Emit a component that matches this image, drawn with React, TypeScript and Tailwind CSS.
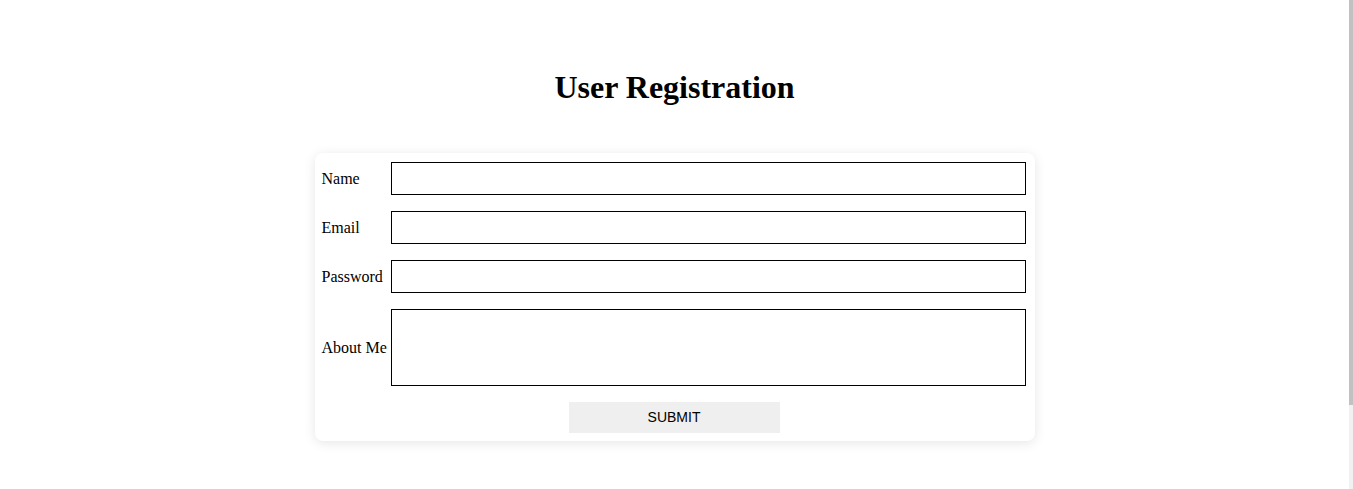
import { useState } from "react"

export default function App() {
  const [form, setForm] = useState({ name: "", email: "", password: "", about: "" })

  const update = (key: keyof typeof form) => (e: React.ChangeEvent<HTMLInputElement | HTMLTextAreaElement>) =>
    setForm({ ...form, [key]: e.target.value })

  const inputClass = "h-[33px] w-full border border-black bg-white outline-none"

  return (
    <div className="min-h-screen bg-white text-black font-['Liberation_Serif','Times_New_Roman',serif] pr-[4px]">
      <h1 className="pt-[69px] text-center text-[32px] font-bold leading-[37px]">User Registration</h1>

      <form
        onSubmit={(e) => e.preventDefault()}
        className="mx-auto mt-[47px] w-[720px] rounded-lg bg-white pl-[7px] pr-[9px] pt-[9px] pb-[8px] shadow-[0_2px_12px_rgba(0,0,0,0.1)]"
      >
        <div className="grid grid-cols-[66px_1fr] items-center gap-x-[3px] gap-y-4 text-base">
          <label className="pt-[1px]">Name</label>
          <input className={inputClass} value={form.name} onChange={update("name")} />

          <label className="pt-[1px]">Email</label>
          <input type="email" className={inputClass} value={form.email} onChange={update("email")} />

          <label className="pt-[1px]">Password</label>
          <input type="password" className={inputClass} value={form.password} onChange={update("password")} />

          <label className="whitespace-nowrap pt-[1px]">About Me</label>
          <textarea
            className="h-[77px] w-full resize-none border border-black bg-white outline-none"
            value={form.about}
            onChange={update("about")}
          />
        </div>

        <div className="mt-[16px] flex justify-center pl-[1px]">
          <button
            type="submit"
            className="h-[31px] w-[211px] bg-[#efefef] font-['Liberation_Sans',Arial,sans-serif] text-[14px] text-black"
          >
            SUBMIT
          </button>
        </div>
      </form>

      {/* scrollbar */}
      <div className="fixed right-0 top-0 h-full w-[4px] bg-[#f1f1f1]">
        <div className="h-[405px] w-full bg-[#c1c1c1]" />
      </div>
    </div>
  )
}
